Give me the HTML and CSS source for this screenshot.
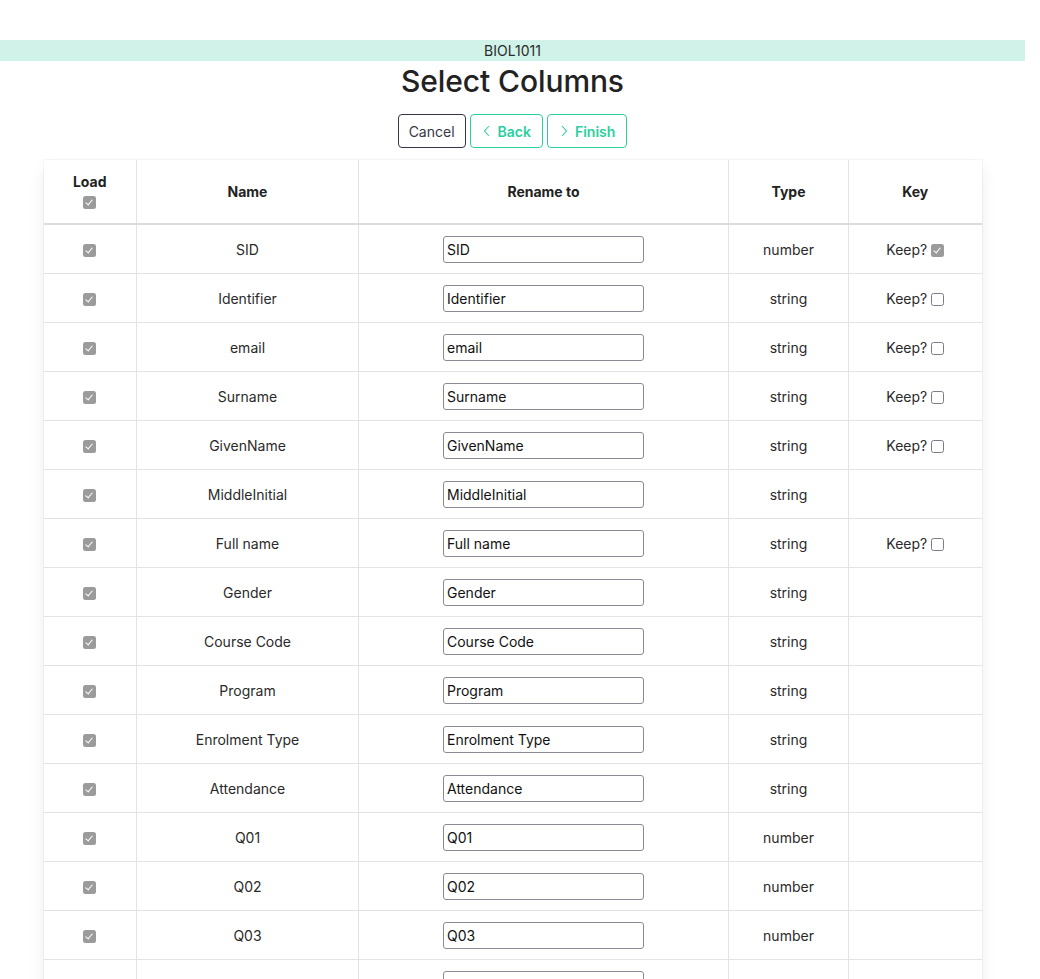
FILE: index.html
```html
<!DOCTYPE html>
<html>
<head>
<meta charset="utf-8">
<link rel="stylesheet" href="styles.css">
</head>
<body>
<div class="page">
  <div class="banner">BIOL1011</div>
  <h1 class="title">Select Columns</h1>
  <div class="buttons">
    <button class="btn btn-dark">Cancel</button>
    <button class="btn btn-primary"><svg class="chev" viewBox="0 0 10 14" width="10" height="14"><path d="M7 2 L2.5 7 L7 12" fill="none" stroke="currentColor" stroke-width="1.1"/></svg>Back</button>
    <button class="btn btn-primary"><svg class="chev" viewBox="0 0 10 14" width="10" height="14"><path d="M3 2 L7.5 7 L3 12" fill="none" stroke="currentColor" stroke-width="1.1"/></svg>Finish</button>
  </div>
  <div class="table-wrap">
    <table class="cols">
      <colgroup>
        <col class="c-load"><col class="c-name"><col class="c-rename"><col class="c-type"><col class="c-key">
      </colgroup>
      <thead>
        <tr>
          <th><div class="th-stack"><span>Load</span><span class="cb cb-on"></span></div></th>
          <th>Name</th>
          <th>Rename to</th>
          <th>Type</th>
          <th>Key</th>
        </tr>
      </thead>
      <tbody>
        <tr><td><span class="cb cb-on"></span></td><td>SID</td><td><input class="rn" type="text" value="SID"></td><td>number</td><td>Keep? <span class="cb cb-on"></span></td></tr>
        <tr><td><span class="cb cb-on"></span></td><td>Identifier</td><td><input class="rn" type="text" value="Identifier"></td><td>string</td><td>Keep? <span class="cb cb-off"></span></td></tr>
        <tr><td><span class="cb cb-on"></span></td><td>email</td><td><input class="rn" type="text" value="email"></td><td>string</td><td>Keep? <span class="cb cb-off"></span></td></tr>
        <tr><td><span class="cb cb-on"></span></td><td>Surname</td><td><input class="rn" type="text" value="Surname"></td><td>string</td><td>Keep? <span class="cb cb-off"></span></td></tr>
        <tr><td><span class="cb cb-on"></span></td><td>GivenName</td><td><input class="rn" type="text" value="GivenName"></td><td>string</td><td>Keep? <span class="cb cb-off"></span></td></tr>
        <tr><td><span class="cb cb-on"></span></td><td>MiddleInitial</td><td><input class="rn" type="text" value="MiddleInitial"></td><td>string</td><td></td></tr>
        <tr><td><span class="cb cb-on"></span></td><td>Full name</td><td><input class="rn" type="text" value="Full name"></td><td>string</td><td>Keep? <span class="cb cb-off"></span></td></tr>
        <tr><td><span class="cb cb-on"></span></td><td>Gender</td><td><input class="rn" type="text" value="Gender"></td><td>string</td><td></td></tr>
        <tr><td><span class="cb cb-on"></span></td><td>Course Code</td><td><input class="rn" type="text" value="Course Code"></td><td>string</td><td></td></tr>
        <tr><td><span class="cb cb-on"></span></td><td>Program</td><td><input class="rn" type="text" value="Program"></td><td>string</td><td></td></tr>
        <tr><td><span class="cb cb-on"></span></td><td>Enrolment Type</td><td><input class="rn" type="text" value="Enrolment Type"></td><td>string</td><td></td></tr>
        <tr><td><span class="cb cb-on"></span></td><td>Attendance</td><td><input class="rn" type="text" value="Attendance"></td><td>string</td><td></td></tr>
        <tr><td><span class="cb cb-on"></span></td><td>Q01</td><td><input class="rn" type="text" value="Q01"></td><td>number</td><td></td></tr>
        <tr><td><span class="cb cb-on"></span></td><td>Q02</td><td><input class="rn" type="text" value="Q02"></td><td>number</td><td></td></tr>
        <tr><td><span class="cb cb-on"></span></td><td>Q03</td><td><input class="rn" type="text" value="Q03"></td><td>number</td><td></td></tr>
        <tr><td><span class="cb cb-on"></span></td><td>Q04</td><td><input class="rn" type="text" value="Q04"></td><td>number</td><td></td></tr>
        <tr><td><span class="cb cb-on"></span></td><td>Q05</td><td><input class="rn" type="text" value="Q05"></td><td>number</td><td></td></tr>
      </tbody>
    </table>
  </div>
</div>
</body>
</html>
```
FILE: styles.css
```css
html, body {
  margin: 0;
  padding: 0;
  background: #fff;
}
body {
  font-family: Inter, "Noto Sans", "Liberation Sans", sans-serif;
  font-size: 14px;
  color: #2a2a2a;
}
.page {
  width: 1025px;
  padding-top: 40px;
  padding-bottom: 40px;
}
.banner {
  background: #d1f2e9;
  height: 21px;
  line-height: 21px;
  text-align: center;
  font-size: 14px;
  color: #2a2a2a;
}
.title {
  margin: 0;
  text-align: center;
  font-size: 30px;
  font-weight: 500;
  line-height: 40px;
  color: #222;
  letter-spacing: -0.1px;
}
.buttons {
  margin-top: 13px;
  display: flex;
  justify-content: center;
  gap: 4px;
}
.btn {
  height: 34px;
  box-sizing: border-box;
  background: #fff;
  border-radius: 4px;
  font-family: inherit;
  font-size: 14px;
  display: inline-flex;
  align-items: center;
  gap: 6px;
  cursor: pointer;
}
.btn-dark {
  border: 1px solid #363646;
  color: #363646;
  padding: 0 10px;
}
.btn-primary {
  border: 1px solid #2ccf9e;
  color: #2ccf9e;
  font-weight: 600;
  padding: 0 11px 0 11px;
}
.chev {
  display: block;
}
.table-wrap {
  width: 938px;
  margin: 12px auto 0;
  box-shadow: 0 8px 16px -2px rgba(10,10,10,0.1), 0 0 0 1px rgba(10,10,10,0.03);
}
.cols {
  width: 100%;
  border-collapse: collapse;
  table-layout: fixed;
}
.c-load { width: 93px; }
.c-name { width: 222px; }
.c-rename { width: 370px; }
.c-type { width: 120px; }
.c-key { width: 133px; }
.cols th, .cols td {
  border: 1px solid #e3e3e6;
  text-align: center;
  vertical-align: middle;
  padding: 0 8px;
}
.cols th {
  height: 64px;
  box-sizing: border-box;
  font-weight: 700;
  color: #222;
  border-bottom: 2px solid #dcdce0;
  border-top: none;
}
.cols th:first-child, .cols td:first-child { border-left: none; }
.cols th:last-child, .cols td:last-child { border-right: none; }
.th-stack {
  display: flex;
  flex-direction: column;
  align-items: center;
  gap: 5px;
  line-height: 18px;
  margin-top: -2px;
}
.cols td {
  height: 48px;
}
.cb {
  display: inline-block;
  width: 13px;
  height: 13px;
  box-sizing: border-box;
  border-radius: 2.5px;
  vertical-align: -2px;
  position: relative;
}
.cb-on {
  background: #9b9b9b;
}
.cb-on::after {
  content: "";
  position: absolute;
  left: 4px;
  top: 2px;
  width: 3px;
  height: 6px;
  border: solid #fff;
  border-width: 0 1.6px 1.6px 0;
  transform: rotate(40deg);
}
.cb-off {
  border: 1px solid #7c7c88;
  background: #fff;
}
.rn {
  width: 201px;
  height: 27px;
  box-sizing: border-box;
  border: 1px solid #8a8a96;
  border-radius: 3px;
  padding: 0 3px;
  font-family: inherit;
  font-size: 14px;
  color: #111;
  display: block;
  margin: 0 auto;
}
```
